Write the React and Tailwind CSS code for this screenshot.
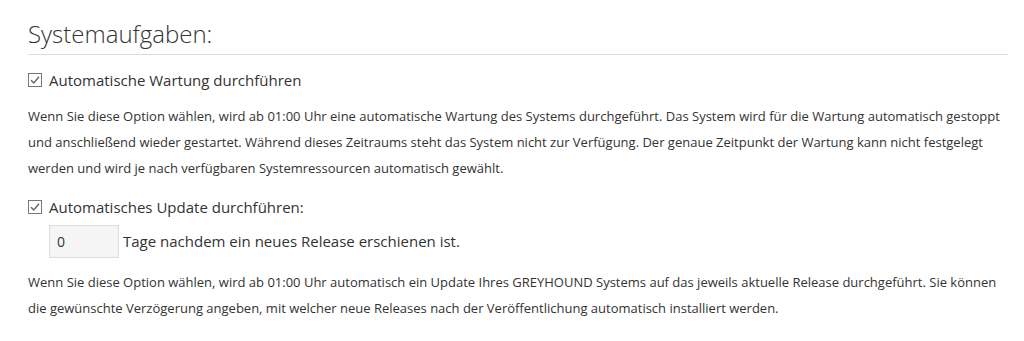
import React from 'react';

function Check({ label }) {
  return (
    <label className="flex items-center gap-[7px] h-[20px] text-[15px] text-[#333]">
      <svg width="14" height="14" viewBox="0 0 14 14" className="shrink-0">
        <rect x="0.5" y="0.5" width="13" height="13" fill="#fff" stroke="#777" />
        <path d="M3 7.2 L5.8 10 L11 3.8" fill="none" stroke="#666" strokeWidth="1.4" />
      </svg>
      <span>{label}</span>
    </label>
  );
}

export default function App() {
  return (
    <div className="w-[1024px] h-[341px] bg-white pl-[28px] pr-[16px] pt-[18px] font-['Open_Sans',sans-serif] text-[#333]">
      <h2 className="text-[24px] font-light leading-[32px] pb-[4px] border-b border-[#ddd]">
        Systemaufgaben:
      </h2>

      <div className="mt-[15px]">
        <Check label="Automatische Wartung durchführen" />
      </div>
      <p className="mt-[13px] text-[13px] leading-[26px]">
        Wenn Sie diese Option wählen, wird ab 01:00 Uhr eine automatische Wartung des Systems durchgeführt. Das System wird für die Wartung automatisch gestoppt und anschließend wieder gestartet. Während dieses Zeitraums steht das System nicht zur Verfügung. Der genaue Zeitpunkt der Wartung kann nicht festgelegt werden und wird je nach verfügbaren Systemressourcen automatisch gewählt.
      </p>

      <div className="mt-[16px]">
        <Check label="Automatisches Update durchführen:" />
      </div>
      <div className="mt-[8px] ml-[21px] flex items-center gap-[4px] text-[15px]">
        <input
          type="text"
          defaultValue="0"
          className="w-[70px] h-[33px] px-[7px] bg-[#f5f5f5] border border-[#ddd] text-[14px] text-[#333] outline-none"
        />
        <span>Tage nachdem ein neues Release erschienen ist.</span>
      </div>
      <p className="mt-[11px] text-[13px] leading-[26px]">
        Wenn Sie diese Option wählen, wird ab 01:00 Uhr automatisch ein Update Ihres GREYHOUND Systems auf das jeweils aktuelle Release durchgeführt. Sie können die gewünschte Verzögerung angeben, mit welcher neue Releases nach der Veröffentlichung automatisch installiert werden.
      </p>
    </div>
  );
}
